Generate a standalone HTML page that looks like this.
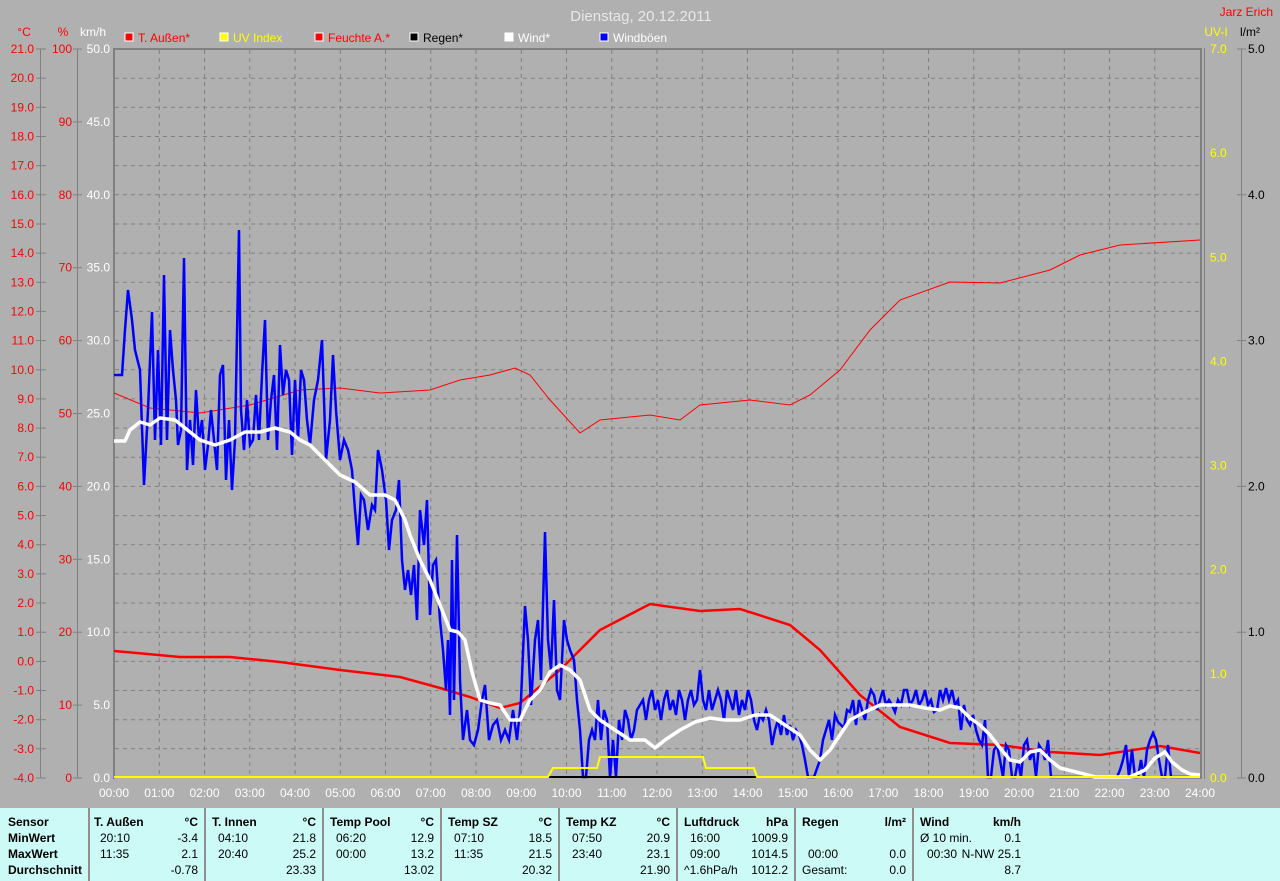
<!DOCTYPE html>
<html><head><meta charset="utf-8"><style>
body{margin:0;width:1280px;height:881px;overflow:hidden;background:#b0b0b0;font-family:"Liberation Sans",sans-serif}
svg{position:absolute;left:0;top:0}
.tbl{position:absolute;left:0;top:808px;width:1280px;height:73px;background:#ccfaf6;font-size:12px;color:#000}
.c{position:absolute;top:0;height:73px;border-left:2px solid #909090}
.r{position:absolute;white-space:nowrap}
b{font-weight:bold}
</style></head><body>
<svg width="1280" height="808" font-family="Liberation Sans, sans-serif" font-size="12">
<rect width="1280" height="808" fill="#b0b0b0"/>
<text x="641" y="21" text-anchor="middle" fill="#e8e8e8" font-size="15">Dienstag, 20.12.2011</text>
<text x="1273" y="16" text-anchor="end" fill="#f00" font-size="12">Jarz Erich</text>
<g font-size="12">
<rect x="125" y="33" width="8" height="8" fill="#f00" stroke="#fff"/><text x="138" y="42" fill="#f00">T. Außen*</text>
<rect x="220" y="33" width="8" height="8" fill="#ff0" stroke="#fff"/><text x="233" y="42" fill="#ff0">UV Index</text>
<rect x="315" y="33" width="8" height="8" fill="#f00" stroke="#fff"/><text x="328" y="42" fill="#f00">Feuchte A.*</text>
<rect x="410" y="33" width="8" height="8" fill="#000" stroke="#fff"/><text x="423" y="42" fill="#000">Regen*</text>
<rect x="505" y="33" width="8" height="8" fill="#fff" stroke="#fff"/><text x="518" y="42" fill="#fff">Wind*</text>
<rect x="600" y="33" width="8" height="8" fill="#00f" stroke="#fff"/><text x="613" y="42" fill="#fff">Windböen</text>
</g>
<text x="24" y="36" text-anchor="middle" fill="#f00">°C</text>
<text x="63" y="36" text-anchor="middle" fill="#f00">%</text>
<text x="93" y="36" text-anchor="middle" fill="#fff">km/h</text>
<text x="1216" y="36" text-anchor="middle" fill="#ff0">UV-I</text>
<text x="1250" y="36" text-anchor="middle" fill="#000">l/m²</text>
<g id="grid" stroke="#808080" stroke-dasharray="4,4" stroke-width="1"></g>
<line x1="40.5" y1="49" x2="40.5" y2="778" stroke="#808080"/>
<line x1="77.5" y1="49" x2="77.5" y2="778" stroke="#808080"/>
<line x1="1241.5" y1="49" x2="1241.5" y2="778" stroke="#808080"/>
<rect x="113" y="48" width="2" height="731" fill="#808080"/>
<rect x="113" y="48" width="1089" height="2" fill="#808080"/>
<rect x="1200" y="48" width="2" height="731" fill="#808080"/>
<rect x="1204" y="48" width="1" height="731" fill="#808080"/>
<g id="labels"></g>
<polyline fill="none" stroke="#f00" stroke-width="1" points="114,393 150,408 200,413 250,405 300,390 340,388 380,393 430,390 460,380 490,375 515,368 530,375 550,400 580,433 600,420 650,415 680,420 700,405 750,400 790,405 810,395 840,370 870,330 900,300 950,282 1000,283 1050,270 1080,255 1120,245 1200,240"/>
<polyline fill="none" stroke="#f00" stroke-width="2.5" points="114,651 180,657 230,657 280,662 340,670 400,677 440,688 470,697 500,708 520,703 560,670 600,630 650,604 700,611 740,609 790,625 820,650 860,695 900,727 950,743 1000,745 1050,752 1100,755 1160,746 1200,753"/>
<polyline fill="none" stroke="#00f" stroke-width="2.5" points="114,375 122,375 125,330 128,290 132,320 135,350 140,370 144,485 148,410 152,312 155,440 158,350 161,445 164,275 167,440 170,330 173,370 176,400 178,445 181,430 184,258 187,470 190,420 193,465 196,390 199,440 202,420 205,470 208,445 211,410 214,440 217,470 220,375 223,365 226,480 229,420 232,490 235,440 239,230 241,410 244,450 247,400 250,445 253,440 256,395 259,440 262,375 265,320 268,440 271,400 274,375 277,450 280,345 283,395 286,370 289,380 292,455 295,380 298,440 301,370 304,380 307,420 310,445 314,400 318,380 322,340 326,460 330,420 333,355 336,410 340,460 344,440 348,450 352,470 355,510 358,545 361,495 364,500 368,530 372,505 375,510 378,450 382,470 386,500 389,550 392,520 396,510 399,480 402,560 405,590 408,570 411,595 414,565 417,620 420,510 424,545 427,500 430,615 433,565 436,560 440,620 443,650 446,690 448,640 450,715 452,560 454,700 457,535 460,680 463,740 467,710 470,740 474,745 478,730 482,700 485,685 489,740 493,725 497,720 501,740 505,730 509,740 513,710 517,740 521,700 525,606 528,640 531,705 535,640 538,620 541,680 545,532 548,640 551,670 554,600 557,690 560,700 564,620 567,640 570,650 574,660 577,700 580,730 583,777 586,777 589,740 592,730 595,740 598,700 601,740 604,710 607,720 610,777 613,740 616,777 619,720 622,740 625,710 628,720 631,740 634,730 637,710 640,705 643,700 646,720 649,700 652,690 655,710 658,700 661,720 664,700 667,690 670,710 673,700 676,715 679,690 682,700 685,720 688,700 691,690 694,705 697,700 700,670 703,700 706,710 709,690 712,710 715,700 718,690 721,700 724,720 727,690 730,700 733,710 736,690 739,715 742,700 745,710 748,690 751,700 754,720 757,730 760,715 763,720 766,710 769,720 772,745 775,730 778,720 781,735 784,715 787,735 790,725 793,740 796,730 799,735 802,745 805,760 808,777 814,777 820,760 823,740 826,730 829,720 832,740 835,715 838,722 841,725 844,728 847,710 850,712 853,700 856,725 859,700 862,710 865,720 868,700 871,690 874,695 877,710 880,700 883,690 886,705 889,700 892,705 895,712 898,700 901,705 904,690 907,690 910,705 913,700 916,690 919,705 922,700 925,690 928,705 931,700 934,712 937,710 940,690 943,700 946,688 949,700 952,690 955,705 958,700 961,730 964,705 967,720 970,725 973,715 976,730 979,740 982,745 985,720 988,777 991,777 994,750 997,745 1000,760 1003,777 1006,745 1009,750 1012,777 1015,777 1018,760 1021,777 1024,745 1027,740 1030,760 1033,750 1036,777 1039,745 1042,750 1045,760 1048,740 1051,777 1117,777 1120,770 1123,760 1126,745 1129,777 1132,750 1135,777 1138,777 1141,760 1144,777 1147,750 1150,740 1153,733 1156,740 1159,760 1162,777 1165,777 1168,745 1171,777 1200,777"/>
<polyline fill="none" stroke="#fff" stroke-width="3.5" stroke-linejoin="round" points="114,441 125,441 130,430 140,422 150,425 160,418 175,420 190,432 200,440 215,445 230,440 245,432 260,432 275,428 290,432 300,440 310,445 325,460 340,475 355,482 370,495 385,495 395,500 405,520 410,535 420,560 430,580 440,605 450,630 458,632 465,640 472,672 480,700 490,703 500,705 510,720 520,720 530,700 540,690 550,672 560,665 570,670 580,680 590,710 600,720 615,730 630,740 645,740 655,748 665,740 680,730 695,722 710,718 725,720 740,720 755,715 770,715 785,725 800,735 810,750 820,760 830,750 840,735 850,720 865,712 880,705 895,705 910,705 925,708 940,710 950,706 960,708 970,718 980,725 990,735 1000,748 1010,760 1020,762 1030,752 1040,750 1050,760 1060,768 1080,773 1095,777 1110,777 1130,777 1145,770 1155,758 1165,752 1172,762 1182,770 1190,774 1200,775"/>
<polyline fill="none" stroke="#000" stroke-width="2" points="548,777 757,777"/>
<polyline fill="none" stroke="#ff0" stroke-width="2" points="114,777 548,777 553,768 597,768 600,757 703,757 706,768 754,768 757,777 1200,777"/>
</svg>
<div class="tbl">
<div class="c" style="left:88px"></div><div class="c" style="left:204px"></div><div class="c" style="left:322px"></div><div class="c" style="left:440px"></div><div class="c" style="left:558px"></div><div class="c" style="left:676px"></div><div class="c" style="left:794px"></div><div class="c" style="left:912px"></div>
<div id="tt"></div>
</div>
<script>
var g=document.getElementById('grid'),L=document.getElementById('labels'),ns='http://www.w3.org/2000/svg';
function el(p,t,a,txt){var e=document.createElementNS(ns,t);for(var k in a)e.setAttribute(k,a[k]);if(txt!=null)e.textContent=txt;p.appendChild(e);return e;}
var y0=49,y1=778,dy=(y1-y0)/25;
for(var i=1;i<25;i++){var y=y0+i*dy;el(g,'line',{x1:115,x2:1200,y1:y.toFixed(1),y2:y.toFixed(1)});}
for(var h=1;h<24;h++){var x=114+h*45.25;el(g,'line',{x1:x.toFixed(1),x2:x.toFixed(1),y1:50,y2:777});}
for(var i=0;i<=25;i++){var y=y0+i*dy;var v=(21-i).toFixed(1);
 el(L,'text',{x:34,y:(y+4).toFixed(1),'text-anchor':'end',fill:'#f00'},v);
 el(L,'line',{x1:36,x2:46,y1:y.toFixed(1),y2:y.toFixed(1),stroke:'#808080'});}
for(var p=0;p<=10;p++){var y=y1-p*(y1-y0)/10;
 el(L,'text',{x:72,y:(y+4).toFixed(1),'text-anchor':'end',fill:'#f00'},String(p*10));
 el(L,'line',{x1:73,x2:82,y1:y.toFixed(1),y2:y.toFixed(1),stroke:'#808080'});
 el(L,'text',{x:110,y:(y+4).toFixed(1),'text-anchor':'end',fill:'#fff'},(p*5).toFixed(1));}
for(var u=0;u<=7;u++){var y=y1-u*(y1-y0)/7;
 el(L,'text',{x:1210,y:(y+4).toFixed(1),fill:'#ff0'},u.toFixed(1));}
for(var u=0;u<=5;u++){var y=y1-u*(y1-y0)/5;
 el(L,'line',{x1:1237,x2:1246,y1:y.toFixed(1),y2:y.toFixed(1),stroke:'#808080'});
 el(L,'text',{x:1248,y:(y+4).toFixed(1),fill:'#000'},u.toFixed(1));}
for(var h=0;h<=24;h++){var x=114+h*45.25;el(L,'text',{x:x.toFixed(1),y:797,'text-anchor':'middle',fill:'#fff'},(h<10?'0':'')+h+':00');}
var tt=document.getElementById('tt');
function t(x,y,s,b,al){var d=document.createElement('div');d.className='r';d.style.top=(y-808-7)+'px';if(al){d.style.right=(1280-x)+'px';}else d.style.left=x+'px';d.innerHTML=b?'<b>'+s+'</b>':s;tt.appendChild(d);}
var ry=[822,838,854,870];
t(8,ry[0],'Sensor',1);t(8,ry[1],'MinWert',1);t(8,ry[2],'MaxWert',1);t(8,ry[3],'Durchschnitt',1);
var cols=[[94,198,'T. Außen','20:10','-3.4','11:35','2.1','-0.78'],[212,316,'T. Innen','04:10','21.8','20:40','25.2','23.33'],[330,434,'Temp Pool','06:20','12.9','00:00','13.2','13.02'],[448,552,'Temp SZ','07:10','18.5','11:35','21.5','20.32'],[566,670,'Temp KZ','07:50','20.9','23:40','23.1','21.90']];
cols.forEach(function(c){t(c[0],ry[0],c[2],1);t(c[1],ry[0],'°C',1,1);t(c[0]+6,ry[1],c[3]);t(c[1],ry[1],c[4],0,1);t(c[0]+6,ry[2],c[5]);t(c[1],ry[2],c[6],0,1);t(c[1],ry[3],c[7],0,1);});
t(684,ry[0],'Luftdruck',1);t(788,ry[0],'hPa',1,1);t(690,ry[1],'16:00');t(788,ry[1],'1009.9',0,1);t(690,ry[2],'09:00');t(788,ry[2],'1014.5',0,1);t(684,ry[3],'^1.6hPa/h');t(788,ry[3],'1012.2',0,1);
t(802,ry[0],'Regen',1);t(906,ry[0],'l/m²',1,1);t(808,ry[2],'00:00');t(906,ry[2],'0.0',0,1);t(802,ry[3],'Gesamt:');t(906,ry[3],'0.0',0,1);
t(920,ry[0],'Wind',1);t(1021,ry[0],'km/h',1,1);t(920,ry[1],'Ø 10 min.');t(1021,ry[1],'0.1',0,1);t(927,ry[2],'00:30');t(1021,ry[2],'N-NW 25.1',0,1);t(1021,ry[3],'8.7',0,1);
</script>
</body></html>
